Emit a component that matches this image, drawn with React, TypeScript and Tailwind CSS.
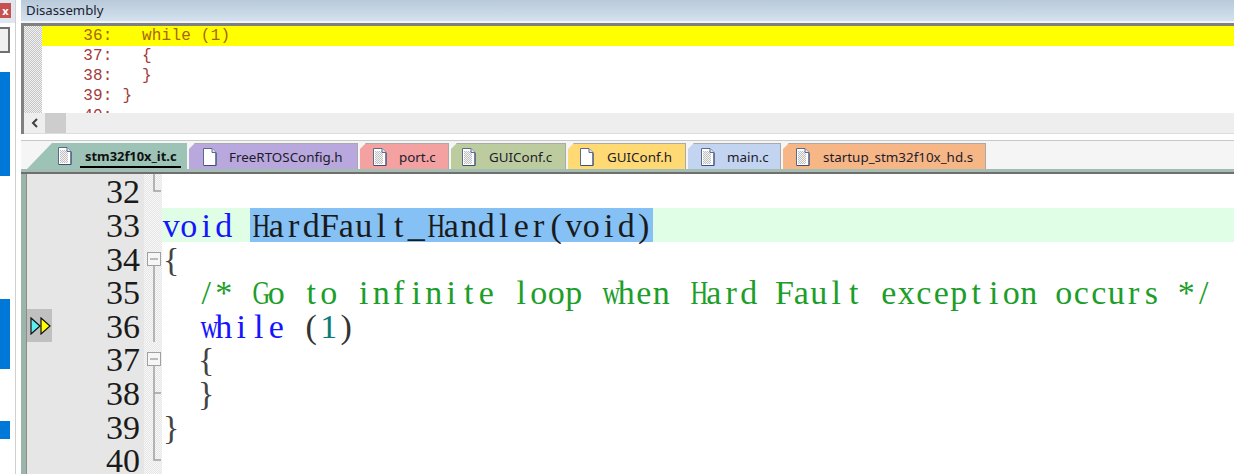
const checker = 'bg-[repeating-conic-gradient(#c4c4c4_0_25%,#f2f2f2_0_50%)] bg-[length:2px_2px]';
const foldChecker = 'bg-[repeating-conic-gradient(#e6e6e6_0_25%,#f7f7f7_0_50%)] bg-[length:2px_2px]';

const TABS = [
  { name: 'FreeRTOSConfig.h', w: 'w-[169px]', bg: 'bg-[#b9a8dd]', pad: 'pl-[13px] gap-[12px]', plain: true },
  { name: 'port.c', w: 'w-[89px]', bg: 'bg-[#f3a1a1]', pad: 'pl-[12px] gap-[12px]', plain: false },
  { name: 'GUIConf.c', w: 'w-[115px]', bg: 'bg-[#bccc9f]', pad: 'pl-[10px] gap-[13px]', plain: false },
  { name: 'GUIConf.h', w: 'w-[118px]', bg: 'bg-[#ffd973]', pad: 'pl-[11px] gap-[13px]', plain: true },
  { name: 'main.c', w: 'w-[93px]', bg: 'bg-[#c3d4f1]', pad: 'pl-[12px] gap-[12px]', plain: false },
  { name: 'startup_stm32f10x_hd.s', w: 'w-[203px]', bg: 'bg-[#f6b686]', pad: 'pl-[12px] gap-[13px]', plain: false },
];

const WIDE = 'mwHG';

// every glyph sits in its own cell, the editor font is fixed pitch
const Mono = ({ text, className = '' }: { text: string; className?: string }) => (
  <span className={`inline-flex ${className}`}>
    {text.split('').map((ch, i) => (
      <span
        key={i}
        className={`relative top-[1px] inline-block w-[17.5px] text-center whitespace-pre ${WIDE.includes(ch) ? 'scale-x-[0.72]' : ''}`}
      >
        {ch}
      </span>
    ))}
  </span>
);

const FileIcon = ({ plain }: { plain: boolean }) => (
  <svg width="15" height="18" viewBox="0 0 15 18" className="shrink-0">
    <defs>
      <pattern id="dots" width="2" height="2" patternUnits="userSpaceOnUse">
        <rect width="2" height="2" fill="#f4f4f4" />
        <rect width="1" height="1" fill="#c0c0c0" />
        <rect x="1" y="1" width="1" height="1" fill="#c0c0c0" />
      </pattern>
    </defs>
    <path d="M1.5.5H10L14 4.5V17.5H1.5Z" fill="#ffffff" stroke="#5a6a8c" />
    {!plain && <rect x="3" y="3" width="8" height="13" fill="url(#dots)" />}
    <path d="M14 5V17.5H2" fill="none" stroke="#3f4f78" />
    <path d="M10 .5V4.5H14" fill="#dfe6f3" stroke="#5a6a8c" />
  </svg>
);

const Tab = ({ name, w, bg, pad, plain }: { name: string; w: string; bg: string; pad: string; plain: boolean }) => (
  <div
    className={`flex items-center h-[26px] border-t border-r border-[#a9a9a9] ${pad} ${w} ${bg} [clip-path:polygon(6px_0,100%_0,100%_100%,0_100%,0_6px)]`}
  >
    <FileIcon plain={plain} />
    <span className="pt-[2px] text-[13.4px] text-[#1c1c2c] whitespace-nowrap">{name}</span>
  </div>
);

type Fold = 'none' | 'end' | 'open' | 'line' | 'tick';

const FoldMark = ({ kind }: { kind: Fold }) => (
  <svg width="18" height="34" viewBox="0 0 18 34" className="block">
    {kind === 'end' && <path d="M10 0V17H17" fill="none" stroke="#a0a0a0" strokeWidth="1.5" />}
    {kind === 'line' && <path d="M10 0V34" stroke="#a0a0a0" strokeWidth="1.5" />}
    {kind === 'tick' && <path d="M10 0V34M10 17H17" fill="none" stroke="#a0a0a0" strokeWidth="1.5" />}
    {kind === 'open' && (
      <>
        <path d="M10 24V34" stroke="#a0a0a0" strokeWidth="1.5" />
        <rect x="3.5" y="10.5" width="13" height="13" fill="#f6f6f6" stroke="#a0a0a0" />
        <path d="M6 17H14" stroke="#808080" />
      </>
    )}
  </svg>
);

const Row = ({
  num,
  fold,
  mark,
  active,
  children,
}: {
  num: number;
  fold: Fold;
  mark?: boolean;
  active?: boolean;
  children?: React.ReactNode;
}) => (
  <div className="flex h-[33.6px] shrink-0 font-['Liberation_Serif',serif] text-[34px] leading-[33.6px]">
    <div className="relative w-[118px] pr-[4px] text-right text-[#1a1a1a] bg-[#e6e6e6] border-l border-[#8c8c8c]">
      {mark && (
        <span className="absolute left-0 top-0 flex items-center justify-end w-[25px] h-[34px] bg-[#c0c0c0]">
          <svg width="23" height="18" viewBox="0 0 23 18">
            <path d="M2 1L11 9L2 17Z" fill="#5cf0f4" stroke="#111" strokeWidth="1.2" />
            <path d="M12 1L21 9L12 17Z" fill="#ffff00" stroke="#111" strokeWidth="1.2" />
          </svg>
        </span>
      )}
      <span className="relative top-[1px]">{num}</span>
    </div>
    <div className={`w-[18px] ${foldChecker}`}>
      <FoldMark kind={fold} />
    </div>
    <div className={`flex-1 pl-[0.5px] whitespace-nowrap ${active ? 'bg-[#e0fde6]' : 'bg-white'}`}>{children}</div>
  </div>
);

const App = () => {
  return (
    <div className="flex w-[1234px] h-[474px] overflow-hidden bg-white font-['Noto_Sans',sans-serif]">
      {/* neighbouring window, cut off on the left */}
      <div className="flex w-[21px] shrink-0 bg-white">
        <div className="w-[16px] border-r border-[#d0d0d0] flex flex-col">
          <div className="h-[23px] bg-[#dfe6ee] pt-[3px]">
            <div className="flex items-center justify-center w-[11px] h-[15px] bg-[#c75050] text-[11px] font-bold text-white leading-none">
              x
            </div>
          </div>
          <div className="h-[26px] w-[10px] mt-[4px] bg-[#f0f0f0] border-y-2 border-r-2 border-[#707070]" />
          <div className="h-[19px] shrink-0" />
          <div className="h-[104px] w-[10px] bg-[#0078d7]" />
          <div className="h-[123px] shrink-0" />
          <div className="h-[70px] w-[10px] bg-[#0078d7]" />
          <div className="h-[52px] shrink-0" />
          <div className="h-[18px] w-[10px] bg-[#0078d7]" />
        </div>
      </div>

      <div className="flex flex-col flex-1 min-w-0">
        {/* disassembly pane */}
        <div className="flex items-center h-[21px] pl-[5px] pt-[1px] bg-gradient-to-b from-[#b8c9d9] to-[#d4e2ef] text-[13.2px] text-[#1a2230]">
          Disassembly
        </div>
        <div className="h-[2px] bg-[#f4f6f8]" />
        <div className="flex flex-col h-[111px] border-t-[3px] border-l-[3px] border-[#808080]">
          <div className="flex h-[87px] overflow-hidden">
            <div className={`w-[18px] ${checker}`} />
            <div className="flex-1 font-['Liberation_Mono',monospace] font-medium text-[16px] tracking-[0.2px] leading-[20px] text-[#a33a3a] whitespace-pre">
              <div className="h-[20px] pl-[2px] bg-[#ffff00] text-[#a8640f]">{'    36:   while (1)'}</div>
              <div className="pl-[2px]">{'    37:   {'}</div>
              <div className="pl-[2px]">{'    38:   }'}</div>
              <div className="pl-[2px]">{'    39: }'}</div>
              <div className="pl-[2px]">{'    40: '}</div>
            </div>
          </div>
          <div className="flex h-[21px] bg-[#eeeeee] border-b border-[#dddddd]">
            <div className="flex items-center justify-center w-[21px]">
              <svg width="10" height="10" viewBox="0 0 10 10">
                <path d="M7 1L3 5L7 9" fill="none" stroke="#404040" strokeWidth="2" />
              </svg>
            </div>
            <div className="w-[21px] bg-[#cdcdcd]" />
          </div>
        </div>
        <div className="h-[6px] bg-white" />

        {/* editor tabs */}
        <div className="flex h-[29px] pt-[2px] gap-[2px] pl-[6px] bg-[#f5f5f5] border-t border-[#c8c8c8]">
          <div className="relative flex items-center h-[26px] w-[160px] pl-[30px] gap-[13px] bg-[#9cc3b5] [clip-path:polygon(25px_0,100%_0,100%_100%,0_100%)]">
            <FileIcon plain={false} />
            <span className="pt-[1px] text-[12.9px] font-bold text-[#101010] whitespace-nowrap">stm32f10x_it.c</span>
            <div className="absolute left-[53px] right-[6px] bottom-[1px] h-[2px] bg-black" />
          </div>
          {TABS.map((tab) => (
            <Tab key={tab.name} {...tab} />
          ))}
        </div>
        <div className="h-[5px] bg-[#a4bdb2] border-b-2 border-[#6f6f6f]" />

        {/* editor */}
        <div className="flex flex-col flex-1 min-h-0 overflow-hidden pt-[0.4px] border-l-[5px] border-[#9cb5aa]">
          <Row num={32} fold="end" />
          <Row num={33} fold="none" active>
            <Mono text="void" className="text-[#1414ff]" />
            <Mono text=" " />
            <span className="inline-flex bg-[#85c1f5] text-[#1a1a1a]">
              <Mono text="HardFault_Handler(void)" />
            </span>
          </Row>
          <Row num={34} fold="open">
            <Mono text="{" className="text-[#444]" />
          </Row>
          <Row num={35} fold="line">
            <Mono text="  /* Go to infinite loop when Hard Fault exception occurs */" className="text-[#1c9e2a]" />
          </Row>
          <Row num={36} fold="line" mark>
            <Mono text="  while" className="text-[#1414ff]" />
            <Mono text=" (" className="text-[#333]" />
            <Mono text="1" className="text-[#0a7a7a]" />
            <Mono text=")" className="text-[#333]" />
          </Row>
          <Row num={37} fold="open">
            <Mono text="  {" className="text-[#444]" />
          </Row>
          <Row num={38} fold="tick">
            <Mono text="  }" className="text-[#444]" />
          </Row>
          <Row num={39} fold="line">
            <Mono text="}" className="text-[#444]" />
          </Row>
          <Row num={40} fold="end" />
        </div>
      </div>
    </div>
  );
};

export default App;
